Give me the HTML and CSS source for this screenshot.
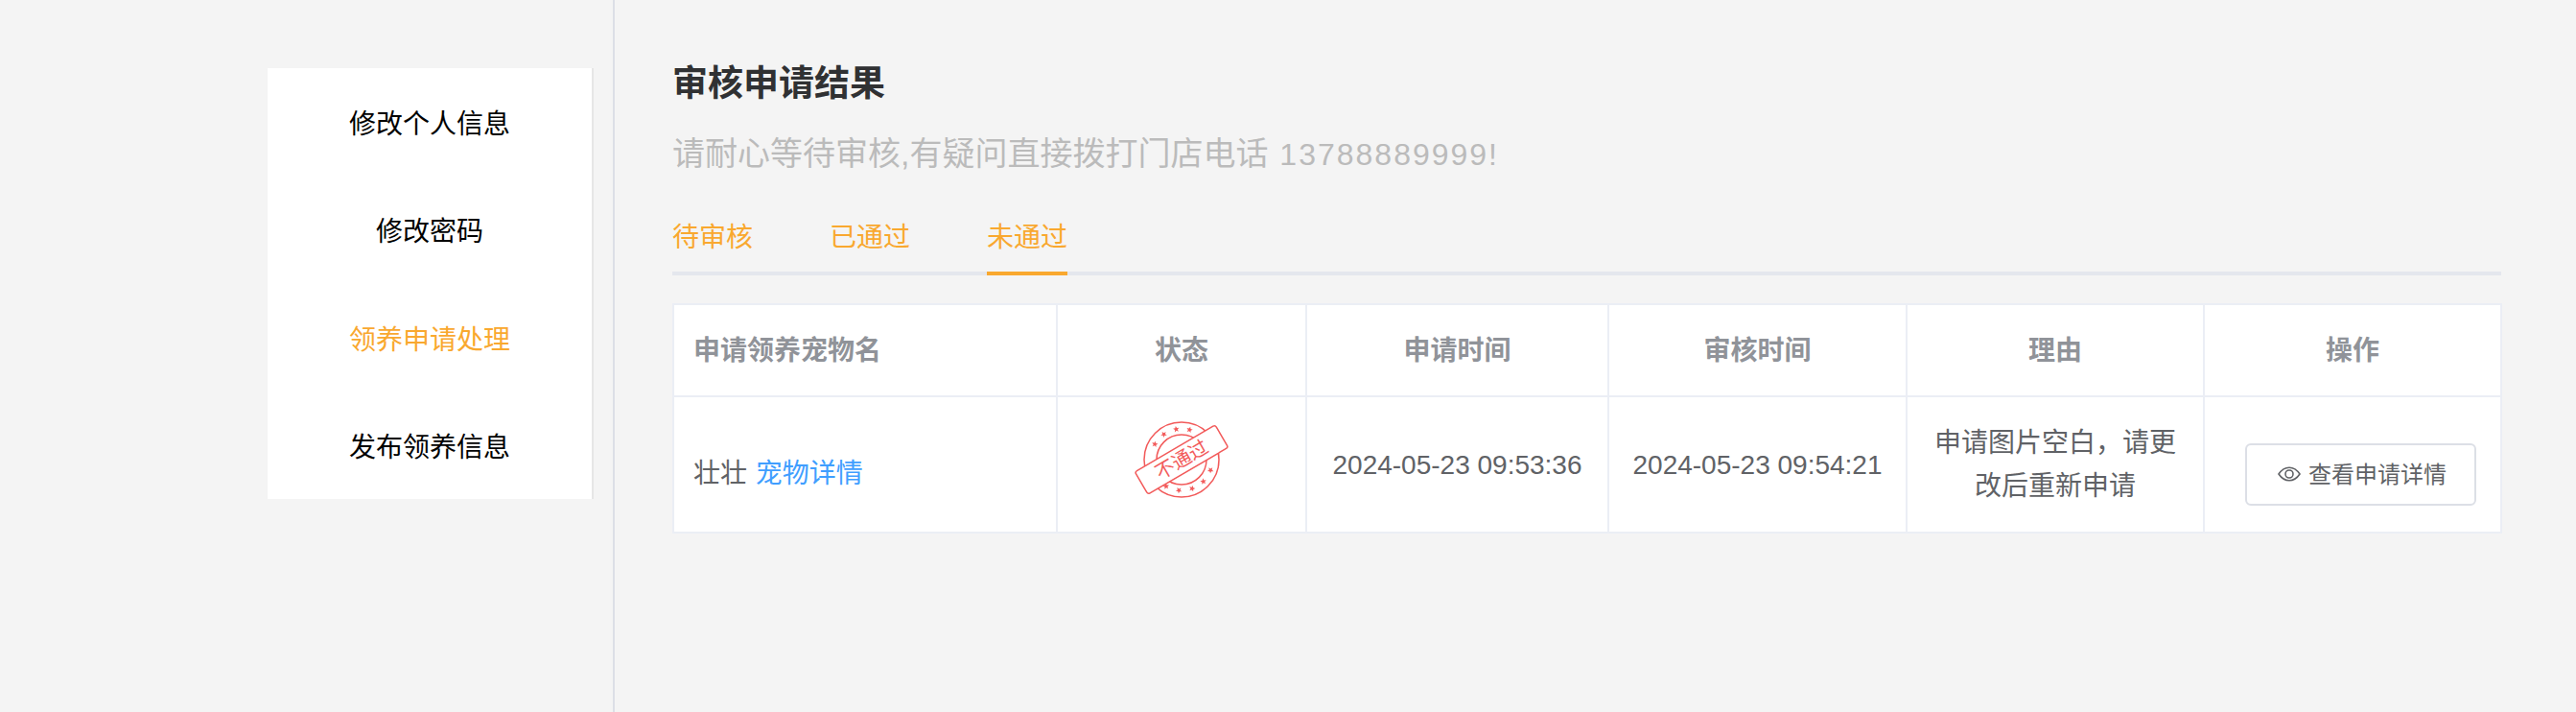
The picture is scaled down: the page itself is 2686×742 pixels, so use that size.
FILE: index.html
```html
<!DOCTYPE html>
<html lang="zh-CN">
<head>
<meta charset="utf-8">
<title>审核申请结果</title>
<link rel="stylesheet" href="styles.css">
</head>
<body>
<div class="page">
  <aside class="side">
    <ul class="menu">
      <li class="menu-item">修改个人信息</li>
      <li class="menu-item">修改密码</li>
      <li class="menu-item is-active">领养申请处理</li>
      <li class="menu-item">发布领养信息</li>
    </ul>
  </aside>
  <main class="main">
    <h2 class="title">审核申请结果</h2>
    <p class="sub">请耐心等待审核,有疑问直接拨打门店电话<span class="phone"> 13788889999!</span></p>
    <div class="tabs">
      <span class="tab">待审核</span>
      <span class="tab">已通过</span>
      <span class="tab is-active">未通过</span>
    </div>
    <table class="grid">
      <colgroup>
        <col class="c1"><col class="c2"><col class="c3"><col class="c4"><col class="c5"><col class="c6">
      </colgroup>
      <thead>
        <tr>
          <th class="left">申请领养宠物名</th>
          <th>状态</th>
          <th>申请时间</th>
          <th>审核时间</th>
          <th>理由</th>
          <th>操作</th>
        </tr>
      </thead>
      <tbody>
        <tr>
          <td class="left"><div class="low">壮壮 <a class="link">宠物详情</a></div></td>
          <td>
            <svg class="stamp" viewBox="0 0 110 90" aria-hidden="true">
              <g transform="translate(55 45)">
                <circle r="39" class="ring"/>
                <circle r="26" class="ring"/>
                <g class="stars">
                  <path d="M0-35.5l.9 2.2 2.3.1-1.8 1.5.6 2.3-2-1.3-2 1.3.6-2.3-1.8-1.5 2.3-.1z" transform="rotate(-60)"/>
                  <path d="M0-35.5l.9 2.2 2.3.1-1.8 1.5.6 2.3-2-1.3-2 1.3.6-2.3-1.8-1.5 2.3-.1z" transform="rotate(-35)"/>
                  <path d="M0-35.5l.9 2.2 2.3.1-1.8 1.5.6 2.3-2-1.3-2 1.3.6-2.3-1.8-1.5 2.3-.1z" transform="rotate(-10)"/>
                  <path d="M0-35.5l.9 2.2 2.3.1-1.8 1.5.6 2.3-2-1.3-2 1.3.6-2.3-1.8-1.5 2.3-.1z" transform="rotate(15)"/>
                  <path d="M0-35.5l.9 2.2 2.3.1-1.8 1.5.6 2.3-2-1.3-2 1.3.6-2.3-1.8-1.5 2.3-.1z" transform="rotate(110)"/>
                  <path d="M0-35.5l.9 2.2 2.3.1-1.8 1.5.6 2.3-2-1.3-2 1.3.6-2.3-1.8-1.5 2.3-.1z" transform="rotate(135)"/>
                  <path d="M0-35.5l.9 2.2 2.3.1-1.8 1.5.6 2.3-2-1.3-2 1.3.6-2.3-1.8-1.5 2.3-.1z" transform="rotate(160)"/>
                  <path d="M0-35.5l.9 2.2 2.3.1-1.8 1.5.6 2.3-2-1.3-2 1.3.6-2.3-1.8-1.5 2.3-.1z" transform="rotate(185)"/>
                  <path d="M0-35.5l.9 2.2 2.3.1-1.8 1.5.6 2.3-2-1.3-2 1.3.6-2.3-1.8-1.5 2.3-.1z" transform="rotate(210)"/>
                </g>
                <g transform="rotate(-30.3)">
                  <rect x="-48.5" y="-13.5" width="97" height="27" rx="2.500" class="band"/>
                  <text class="stamp-text" text-anchor="middle" y="7">不通过</text>
                </g>
              </g>
            </svg>
          </td>
          <td>2024-05-23 09:53:36</td>
          <td>2024-05-23 09:54:21</td>
          <td>申请图片空白，请更改后重新申请</td>
          <td class="op">
            <button class="btn" type="button">
              <svg class="eye" viewBox="0 0 24 16" aria-hidden="true">
                <path d="M1 8C4 3.6 7.6 1.2 12 1.2S20 3.6 23 8c-3 4.400-6.600 6.800-11 6.800S4 12.400 1 8z"/>
                <circle cx="12" cy="8" r="4"/>
              </svg>
              <span>查看申请详情</span>
            </button>
          </td>
        </tr>
      </tbody>
    </table>
  </main>
</div>
</body>
</html>
```
FILE: styles.css
```css
* { box-sizing: border-box; }
html, body { margin: 0; padding: 0; }
body {
  background: #f4f4f4;
  font-family: "Liberation Sans", "Noto Sans CJK SC", sans-serif;
  color: #606266;
}
.page { display: flex; min-height: 742px; }
.side {
  width: 641px;
  flex: none;
  padding: 71px 0 0 279px;
  border-right: 2px solid #dcdfe6;
}
.menu {
  list-style: none;
  margin: 0;
  padding: 0;
  width: 338px;
  background: #fff;
  box-shadow: 2px 0 0 #e6e6e6;
}
.menu-item {
  height: 112.25px;
  line-height: 118px;
  text-align: center;
  font-size: 28px;
  color: #000;
}
.menu-item.is-active { color: #f9a82f; }
.main { width: 1967px; flex: none; padding: 0 0 0 60px; }
.title {
  margin: 60px 0 0;
  font-size: 37px;
  line-height: 56px;
  font-weight: 700;
  color: #303133;
}
.sub {
  margin: 16px 0 0;
  height: 56px;
  font-size: 34px;
  line-height: 56px;
  color: #bbb;
}
.phone { margin-left: 1px; font-size: 32px; line-height: 1; letter-spacing: 2px; }
.tabs {
  display: flex;
  gap: 80px;
  margin-top: 44px;
  width: 1907px;
  height: 55px;
  border-bottom: 4px solid #e4e7ed;
}
.tab {
  height: 55px;
  line-height: 32px;
  font-size: 28px;
  color: #f9a82f;
}
.tab.is-active { border-bottom: 4px solid #f9a82f; }
.grid {
  margin-top: 29px;
  width: 1908px;
  table-layout: fixed;
  border-collapse: separate;
  border-spacing: 0;
  background: #fff;
  border-top: 2px solid #ebeef5;
  border-left: 2px solid #ebeef5;
}
.c1 { width: 400px; }
.c2 { width: 260px; }
.c3 { width: 315px; }
.c4 { width: 311px; }
.c5 { width: 310px; }
.c6 { width: 310px; }
.grid th, .grid td {
  border-right: 2px solid #ebeef5;
  border-bottom: 2px solid #ebeef5;
  text-align: center;
  font-size: 28px;
  padding: 0 20px;
}
.grid th {
  height: 96px;
  padding-bottom: 5px;
  font-weight: 700;
  color: #909399;
}
.grid td {
  height: 142px;
  line-height: 45px;
  color: #606266;
}
.grid .left { text-align: left; }
.grid .op { text-align: left; padding: 0 0 0 42px; }
.low { padding-top: 19px; }
.link { margin-left: 1px; color: #409eff; }
.stamp {
  display: block;
  width: 110px;
  height: 90px;
  margin: -11px auto 0;
}
.ring { fill: none; stroke: #f25a5a; stroke-width: 1.5; }
.band { fill: #fff; stroke: #f25a5a; stroke-width: 1.500; }
.stars { fill: #f25a5a; }
.stamp-text { font-size: 20px; fill: #f25a5a; }
.btn {
  display: inline-flex;
  align-items: center;
  gap: 8px;
  height: 65px;
  width: 241px;
  margin-top: 20px;
  padding: 0 0 0 32px;
  background: #fff;
  border: 2px solid #dcdfe6;
  border-radius: 6px;
  font: inherit;
  font-size: 24px;
  color: #606266;
  vertical-align: top;
}
.eye { width: 24px; height: 16px; flex: none; fill: none; stroke: #606266; stroke-width: 1.6; }
```
